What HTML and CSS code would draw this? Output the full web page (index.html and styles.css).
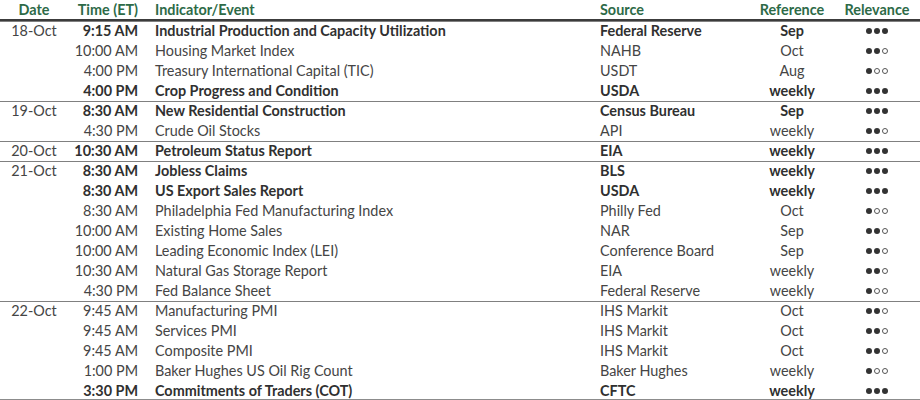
FILE: index.html
```html
<!DOCTYPE html>
<html>
<head>
<meta charset="utf-8">
<link rel="stylesheet" href="styles.css">
</head>
<body>
<table class="cal">
<colgroup>
<col class="c-date"><col class="c-time"><col class="c-ind"><col class="c-src"><col class="c-ref"><col class="c-rel">
</colgroup>
<thead>
<tr><th class="date">Date</th><th class="time">Time (ET)</th><th class="ind">Indicator/Event</th><th class="src">Source</th><th class="ref">Reference</th><th class="relh">Relevance</th></tr>
</thead>
<tbody class="grp">
<tr class="b"><td class="date">18-Oct</td><td class="time">9:15 AM</td><td class="ind">Industrial Production and Capacity Utilization</td><td class="src">Federal Reserve</td><td class="ref">Sep</td><td class="rel"><span class="d f"></span><span class="d f"></span><span class="d f"></span></td></tr>
<tr><td class="date"></td><td class="time">10:00 AM</td><td class="ind">Housing Market Index</td><td class="src">NAHB</td><td class="ref">Oct</td><td class="rel"><span class="d f"></span><span class="d f"></span><span class="d o"></span></td></tr>
<tr><td class="date"></td><td class="time">4:00 PM</td><td class="ind">Treasury International Capital (TIC)</td><td class="src">USDT</td><td class="ref">Aug</td><td class="rel"><span class="d f"></span><span class="d o"></span><span class="d o"></span></td></tr>
<tr class="b"><td class="date"></td><td class="time">4:00 PM</td><td class="ind">Crop Progress and Condition</td><td class="src">USDA</td><td class="ref">weekly</td><td class="rel"><span class="d f"></span><span class="d f"></span><span class="d f"></span></td></tr>
</tbody>
<tbody class="grp">
<tr class="b"><td class="date">19-Oct</td><td class="time">8:30 AM</td><td class="ind">New Residential Construction</td><td class="src">Census Bureau</td><td class="ref">Sep</td><td class="rel"><span class="d f"></span><span class="d f"></span><span class="d f"></span></td></tr>
<tr><td class="date"></td><td class="time">4:30 PM</td><td class="ind">Crude Oil Stocks</td><td class="src">API</td><td class="ref">weekly</td><td class="rel"><span class="d f"></span><span class="d f"></span><span class="d o"></span></td></tr>
</tbody>
<tbody class="grp">
<tr class="b"><td class="date">20-Oct</td><td class="time">10:30 AM</td><td class="ind">Petroleum Status Report</td><td class="src">EIA</td><td class="ref">weekly</td><td class="rel"><span class="d f"></span><span class="d f"></span><span class="d f"></span></td></tr>
</tbody>
<tbody class="grp">
<tr class="b"><td class="date">21-Oct</td><td class="time">8:30 AM</td><td class="ind">Jobless Claims</td><td class="src">BLS</td><td class="ref">weekly</td><td class="rel"><span class="d f"></span><span class="d f"></span><span class="d f"></span></td></tr>
<tr class="b"><td class="date"></td><td class="time">8:30 AM</td><td class="ind">US Export Sales Report</td><td class="src">USDA</td><td class="ref">weekly</td><td class="rel"><span class="d f"></span><span class="d f"></span><span class="d f"></span></td></tr>
<tr><td class="date"></td><td class="time">8:30 AM</td><td class="ind">Philadelphia Fed Manufacturing Index</td><td class="src">Philly Fed</td><td class="ref">Oct</td><td class="rel"><span class="d f"></span><span class="d o"></span><span class="d o"></span></td></tr>
<tr><td class="date"></td><td class="time">10:00 AM</td><td class="ind">Existing Home Sales</td><td class="src">NAR</td><td class="ref">Sep</td><td class="rel"><span class="d f"></span><span class="d f"></span><span class="d o"></span></td></tr>
<tr><td class="date"></td><td class="time">10:00 AM</td><td class="ind">Leading Economic Index (LEI)</td><td class="src">Conference Board</td><td class="ref">Sep</td><td class="rel"><span class="d f"></span><span class="d f"></span><span class="d o"></span></td></tr>
<tr><td class="date"></td><td class="time">10:30 AM</td><td class="ind">Natural Gas Storage Report</td><td class="src">EIA</td><td class="ref">weekly</td><td class="rel"><span class="d f"></span><span class="d f"></span><span class="d o"></span></td></tr>
<tr><td class="date"></td><td class="time">4:30 PM</td><td class="ind">Fed Balance Sheet</td><td class="src">Federal Reserve</td><td class="ref">weekly</td><td class="rel"><span class="d f"></span><span class="d o"></span><span class="d o"></span></td></tr>
</tbody>
<tbody class="grp last">
<tr><td class="date">22-Oct</td><td class="time">9:45 AM</td><td class="ind">Manufacturing PMI</td><td class="src">IHS Markit</td><td class="ref">Oct</td><td class="rel"><span class="d f"></span><span class="d f"></span><span class="d o"></span></td></tr>
<tr><td class="date"></td><td class="time">9:45 AM</td><td class="ind">Services PMI</td><td class="src">IHS Markit</td><td class="ref">Oct</td><td class="rel"><span class="d f"></span><span class="d f"></span><span class="d o"></span></td></tr>
<tr><td class="date"></td><td class="time">9:45 AM</td><td class="ind">Composite PMI</td><td class="src">IHS Markit</td><td class="ref">Oct</td><td class="rel"><span class="d f"></span><span class="d f"></span><span class="d o"></span></td></tr>
<tr><td class="date"></td><td class="time">1:00 PM</td><td class="ind">Baker Hughes US Oil Rig Count</td><td class="src">Baker Hughes</td><td class="ref">weekly</td><td class="rel"><span class="d f"></span><span class="d o"></span><span class="d o"></span></td></tr>
<tr class="b"><td class="date"></td><td class="time">3:30 PM</td><td class="ind">Commitments of Traders (COT)</td><td class="src">CFTC</td><td class="ref">weekly</td><td class="rel"><span class="d f"></span><span class="d f"></span><span class="d f"></span></td></tr>
</tbody>
</table>
</body>
</html>
```
FILE: styles.css
```css
html, body {
  margin: 0;
  padding: 0;
  background: #ffffff;
}
body {
  font-family: Lato, "Open Sans", sans-serif;
  font-size: 14.4px;
  color: #454545;
}
.cal {
  width: 920px;
  border-collapse: separate;
  border-spacing: 0;
  table-layout: fixed;
}
.c-date { width: 68px; }
.c-time { width: 77px; }
.c-ind { width: 445px; }
.c-src { width: 160px; }
.c-ref { width: 84px; }
.c-rel { width: 86px; }
.cal th {
  font-weight: 700;
  color: #2d6a47;
  height: 21px;
  padding: 0 0 1px 0;
  line-height: 20px;
  box-shadow: inset 0 -2px 0 #3c3c3c;
  box-sizing: border-box;
}
.cal td {
  height: 20px;
  padding: 0;
  line-height: 20px;
  white-space: nowrap;
}
.grp tr:first-child td {
  box-shadow: inset 0 1px 0 #808080;
}
.grp.last tr:last-child td {
  box-shadow: inset 0 -2px 0 #8c8c8c;
}
.date { text-align: center; }
.time { text-align: right; padding-right: 7px !important; }
.ind { text-align: left; padding-left: 10px !important; }
.src { text-align: left; padding-left: 10px !important; }
.ref { text-align: center; }
.relh { text-align: center; }
.rel { text-align: center; font-size: 0; }
.b td {
  font-weight: 700;
  color: #303030;
}
.b td.date {
  font-weight: 400;
  color: #454545;
}
.d {
  display: inline-block;
  width: 6px;
  height: 6px;
  border-radius: 50%;
  margin: 0 1px;
  box-sizing: border-box;
  vertical-align: middle;
}
.d.f { background: #333333; }
.d.o { border: 1px solid #555555; background: #ffffff; }
```
